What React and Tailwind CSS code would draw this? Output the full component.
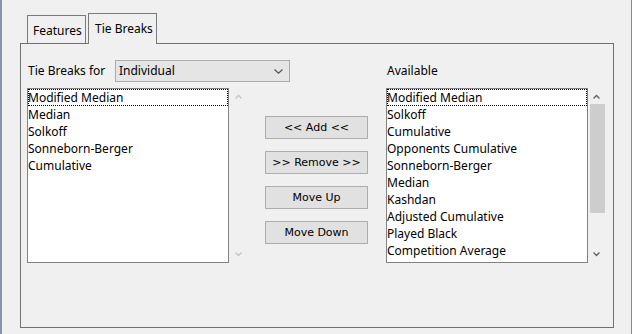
import React from "react";

const selected = ["Modified Median", "Median", "Solkoff", "Sonneborn-Berger", "Cumulative"];

const available = [
  "Modified Median",
  "Solkoff",
  "Cumulative",
  "Opponents Cumulative",
  "Sonneborn-Berger",
  "Median",
  "Kashdan",
  "Adjusted Cumulative",
  "Played Black",
  "Competition Average",
];

const Chevron = ({ up, color }) => (
  <svg width="7" height="5" viewBox="0 0 7 5" className="block">
    <polyline
      points={up ? "0.5,4.5 3.5,1.5 6.5,4.5" : "0.5,0.5 3.5,3.5 6.5,0.5"}
      fill="none"
      stroke={color}
      strokeWidth="1.3"
    />
  </svg>
);

const ListBox = ({ items }) => (
  <div className="w-[202px] h-[175px] border border-[#828282] bg-white overflow-hidden font-['Noto_Sans',sans-serif] text-[12px] text-black">
    {items.map((name, i) => (
      <div
        key={name}
        className={
          "h-[17px] leading-[17px] whitespace-nowrap " +
          (i === 0 ? "outline-1 outline-dotted outline-black -outline-offset-1" : "")
        }
      >
        {name}
      </div>
    ))}
  </div>
);

const Button = ({ children }) => (
  <button className="w-[103px] h-[23px] bg-[#e1e1e1] border border-[#adadad] font-['DejaVu_Sans',sans-serif] text-[11px] text-black leading-none">
    {children}
  </button>
);

export default function App() {
  return (
    <div className="w-[632px] h-[334px] bg-[#f0f0f0] flex overflow-hidden font-['Noto_Sans',sans-serif] text-[12px] text-black">
      <div className="w-[2px] bg-[#8593ab]" />
      <div className="flex-1 pl-[18px] pt-[13px]">
        {/* tabs */}
        <div className="flex items-end pl-[7px] h-[30px]">
          <div className="w-[59px] h-[28px] border border-b-0 border-[#7a7a7a] bg-[#f0f0f0] pl-[5px] pt-[6px] leading-[17px]">
            Features
          </div>
          <div className="relative z-10 ml-[2px] -mb-px w-[69px] h-[31px] border border-b-0 border-[#7a7a7a] bg-[#f0f0f0] pl-[6px] pt-[6px] leading-[17px]">
            Tie Breaks
          </div>
        </div>

        {/* panel */}
        <div className="w-[594px] h-[285px] border border-[#707070] pl-[6px] pt-[16px]">
          <div className="flex items-center h-[22px]">
            <div className="w-[88px] pl-px">Tie Breaks for</div>
            <div className="w-[175px] h-[22px] bg-[#e5e5e5] border border-[#acacac] flex items-center justify-between pl-[3px] pr-[6px]">
              <span>Individual</span>
              <svg width="9" height="5" viewBox="0 0 9 5" className="block">
                <polyline points="0.5,0.5 4.5,4.2 8.5,0.5" fill="none" stroke="#505050" strokeWidth="1.1" />
              </svg>
            </div>
            <div className="ml-[96px] pl-px">Available</div>
          </div>

          <div className="flex mt-[6px]">
            <ListBox items={selected} />
            <div className="w-[17px] h-[175px] flex flex-col items-center justify-between py-[6px] pl-[2px]">
              <Chevron up color="#c4c4c4" />
              <Chevron color="#c4c4c4" />
            </div>

            <div className="ml-[19px] pt-[28px] flex flex-col gap-3">
              <Button>{"<< Add <<"}</Button>
              <Button>{">> Remove >>"}</Button>
              <Button>Move Up</Button>
              <Button>Move Down</Button>
            </div>

            <div className="ml-[18px] flex">
              <ListBox items={available} />
              <div className="w-[17px] h-[175px] flex flex-col items-center pt-[6px] pb-[6px]">
                <Chevron up color="#606060" />
                <div className="w-[15px] h-[109px] bg-[#cdcdcd] mt-[5px] ml-[1px]" />
                <div className="flex-1" />
                <Chevron color="#606060" />
              </div>
            </div>
          </div>
        </div>
      </div>
      <div className="w-px bg-[#888888]" />
    </div>
  );
}
